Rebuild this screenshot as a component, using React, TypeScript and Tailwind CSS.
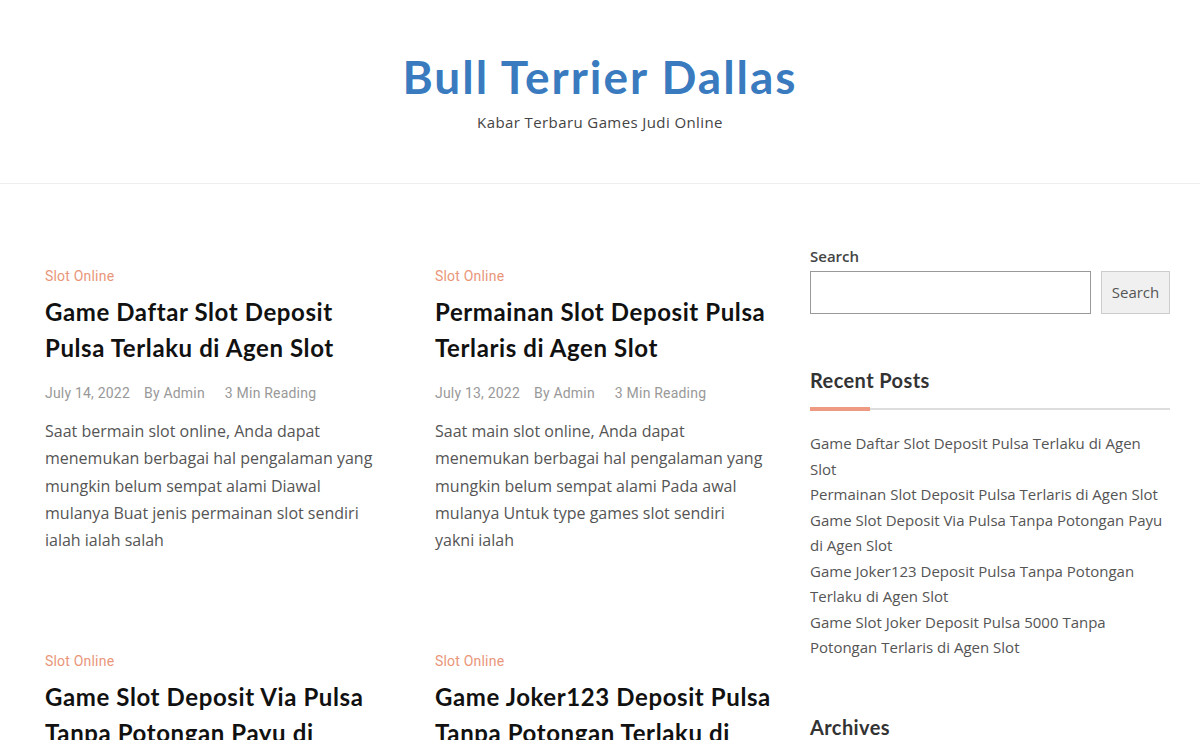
const heading = "font-['Lato','Noto_Sans',sans-serif]";
const body = "font-['Open_Sans','Noto_Sans',sans-serif]";
const meta = "font-['Roboto','Noto_Sans',sans-serif]";

// title lines are split as the theme wraps them
const posts = [
  {
    title: ['Game Daftar Slot Deposit', 'Pulsa Terlaku di Agen Slot'],
    date: 'July 14, 2022',
    excerpt:
      'Saat bermain slot online, Anda dapat menemukan berbagai hal pengalaman yang mungkin belum sempat alami Diawal mulanya Buat jenis permainan slot sendiri ialah ialah salah',
  },
  {
    title: ['Permainan Slot Deposit Pulsa', 'Terlaris di Agen Slot'],
    date: 'July 13, 2022',
    excerpt:
      'Saat main slot online, Anda dapat menemukan berbagai hal pengalaman yang mungkin belum sempat alami Pada awal mulanya Untuk type games slot sendiri yakni ialah',
  },
  {
    title: ['Game Slot Deposit Via Pulsa', 'Tanpa Potongan Payu di', 'Agen Slot'],
    date: 'July 12, 2022',
    excerpt:
      'Saat bermain slot online, Anda dapat menemukan berbagai hal pengalaman yang mungkin belum sempat alami',
  },
  {
    title: ['Game Joker123 Deposit Pulsa', 'Tanpa Potongan Terlaku di', 'Agen Slot'],
    date: 'July 11, 2022',
    excerpt:
      'Saat main slot online, Anda dapat menemukan berbagai hal pengalaman yang mungkin belum sempat alami',
  },
];

const recent = [
  'Game Daftar Slot Deposit Pulsa Terlaku di Agen Slot',
  'Permainan Slot Deposit Pulsa Terlaris di Agen Slot',
  'Game Slot Deposit Via Pulsa Tanpa Potongan Payu di Agen Slot',
  'Game Joker123 Deposit Pulsa Tanpa Potongan Terlaku di Agen Slot',
  'Game Slot Joker Deposit Pulsa 5000 Tanpa Potongan Terlaris di Agen Slot',
];

function PostCard({ post }: { post: (typeof posts)[number] }) {
  return (
    <article className="pb-[97px] pl-[15px] pr-[30px]">
      <div className={`${meta} text-[14px] leading-[20px] tracking-[0.2px] text-[#e9967a]`}>
        Slot Online
      </div>
      <h2
        className={`${heading} mt-[8px] text-[24px] font-bold leading-[36px] tracking-[0.6px] text-[#111]`}
      >
        {post.title.map((line) => (
          <span key={line} className="block whitespace-nowrap">
            {line}
          </span>
        ))}
      </h2>
      <div
        className={`${meta} mt-[17px] flex gap-[14px] text-[14px] leading-[20px] tracking-[0.2px] text-[#999]`}
      >
        <span>{post.date}</span>
        <span>By Admin</span>
        <span className="ml-[6px]">3 Min Reading</span>
      </div>
      <p className={`${body} mt-[15px] pr-[12px] text-[16px] leading-[27.3px] text-[#555]`}>
        {post.excerpt}
      </p>
    </article>
  );
}

export default function App() {
  return (
    <div className="min-h-screen bg-white">
      <header className="flex h-[184px] flex-col items-center border-b border-[#eeeeee] pt-[49px]">
        <h1
          className={`${heading} text-[46px] font-bold leading-[56px] tracking-[2px] text-[#3a7bbf]`}
        >
          Bull Terrier Dallas
        </h1>
        <p className={`${body} mt-[5px] text-[15px] leading-[24px] tracking-[0.4px] text-[#444]`}>
          Kabar Terbaru Games Judi Online
        </p>
      </header>

      <main className="mx-auto flex w-[1140px] pt-[82px]">
        <div className="grid w-[780px] grid-cols-2">
          {posts.map((p) => (
            <PostCard key={p.title[0]} post={p} />
          ))}
        </div>

        <aside className="-mt-[20px] w-[360px]">
          <label className={`${body} block text-[15px] font-semibold leading-[20px] text-[#444]`}>
            Search
          </label>
          <div className="mt-[5px] flex gap-[10px]">
            <input className="h-[43px] flex-1 border border-[#999] bg-white outline-none" />
            <button
              className={`${body} h-[43px] w-[69px] border border-[#ccc] bg-[#f0f0f0] text-[15px] text-[#555]`}
            >
              Search
            </button>
          </div>

          <h3
            className={`${heading} mt-[54px] text-[20px] font-bold leading-[24px] tracking-[0.4px] text-[#333]`}
          >
            Recent Posts
          </h3>
          <div className="relative mt-[15px] h-[4px]">
            <div className="absolute left-0 right-0 top-[1px] h-[2px] bg-[#dddddd]" />
            <div className="absolute left-0 top-0 h-[4px] w-[60px] bg-[#ee9a83]" />
          </div>
          <ul className={`${body} mt-[20px] text-[15px] leading-[25.5px] text-[#555]`}>
            {recent.map((r) => (
              <li key={r}>{r}</li>
            ))}
          </ul>

          <h3
            className={`${heading} mt-[54px] text-[20px] font-bold leading-[24px] tracking-[0.4px] text-[#333]`}
          >
            Archives
          </h3>
        </aside>
      </main>
    </div>
  );
}
